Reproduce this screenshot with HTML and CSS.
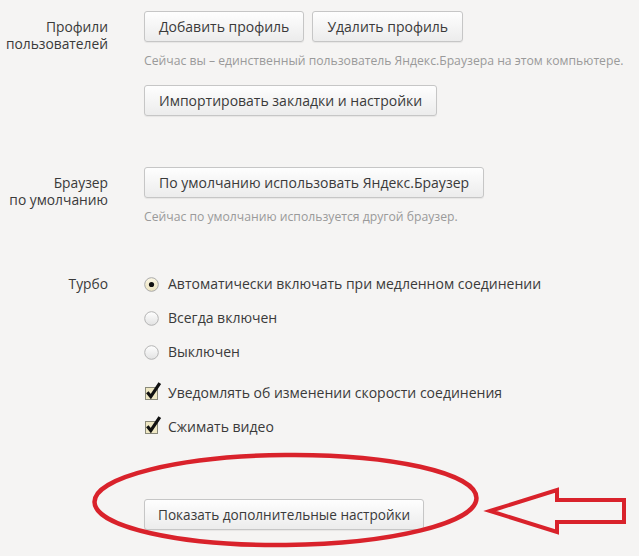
FILE: index.html
```html
<!DOCTYPE html>
<html lang="ru">
<head>
<meta charset="utf-8">
<link rel="stylesheet" href="styles.css">
</head>
<body>
<div class="page">
  <section class="section profiles">
    <div class="label"><span class="label-line">Профили</span><span class="label-line">пользователей</span></div>
    <div class="controls">
      <div class="btn-row">
        <button class="btn">Добавить профиль</button>
        <button class="btn">Удалить профиль</button>
      </div>
      <div class="hint">Сейчас вы – единственный пользователь Яндекс.Браузера на этом компьютере.</div>
      <div class="btn-row import-row">
        <button class="btn">Импортировать закладки и настройки</button>
      </div>
    </div>
  </section>

  <section class="section default-browser">
    <div class="label"><span class="label-line">Браузер</span><span class="label-line">по умолчанию</span></div>
    <div class="controls">
      <div class="btn-row">
        <button class="btn">По умолчанию использовать Яндекс.Браузер</button>
      </div>
      <div class="hint">Сейчас по умолчанию используется другой браузер.</div>
    </div>
  </section>

  <section class="section turbo">
    <div class="label turbo-label"><span class="label-line">Турбо</span></div>
    <div class="controls options">
      <div class="option">
        <svg class="radio" width="15" height="15" viewBox="0 0 15 15"><defs><linearGradient id="rg1" x1="0" y1="0" x2="0" y2="1"><stop offset="0" stop-color="#fbf7e4"/><stop offset="1" stop-color="#ece3bf"/></linearGradient></defs><circle cx="7.5" cy="7.5" r="6.8" fill="url(#rg1)" stroke="#a9a9a9"/><circle cx="7.5" cy="7.5" r="2.6" fill="#111"/></svg>
        <span>Автоматически включать при медленном соединении</span>
      </div>
      <div class="option">
        <svg class="radio" width="15" height="15" viewBox="0 0 15 15"><defs><linearGradient id="rg2" x1="0" y1="0" x2="0" y2="1"><stop offset="0" stop-color="#ffffff"/><stop offset="1" stop-color="#e2e2e2"/></linearGradient></defs><circle cx="7.5" cy="7.5" r="6.8" fill="url(#rg2)" stroke="#b4b4b4"/></svg>
        <span>Всегда включен</span>
      </div>
      <div class="option">
        <svg class="radio" width="15" height="15" viewBox="0 0 15 15"><circle cx="7.5" cy="7.5" r="6.8" fill="url(#rg2)" stroke="#b4b4b4"/></svg>
        <span>Выключен</span>
      </div>
      <div class="option check-first">
        <svg class="check" width="18" height="20" viewBox="0 0 18 20"><rect x="1.5" y="7.5" width="12" height="12" fill="#efe8c4" stroke="#8a8a7a"/><path d="M3.3 12.3 L6.8 16.6 L15.8 3.2" fill="none" stroke="#111" stroke-width="3.2" stroke-linejoin="miter"/></svg>
        <span>Уведомлять об изменении скорости соединения</span>
      </div>
      <div class="option">
        <svg class="check" width="18" height="20" viewBox="0 0 18 20"><rect x="1.5" y="7.5" width="12" height="12" fill="#efe8c4" stroke="#8a8a7a"/><path d="M3.3 12.3 L6.8 16.6 L15.8 3.2" fill="none" stroke="#111" stroke-width="3.2" stroke-linejoin="miter"/></svg>
        <span>Сжимать видео</span>
      </div>
    </div>
  </section>

  <section class="section more">
    <div class="label"></div>
    <div class="controls">
      <button class="btn btn-more">Показать дополнительные настройки</button>
    </div>
  </section>

  <svg class="annotation" width="639" height="556" viewBox="0 0 639 556">
    <ellipse cx="285.5" cy="500" rx="191" ry="45" fill="none" stroke="#d9222b" stroke-width="4.5" transform="rotate(-0.6 285 500)"/>
    <polygon points="490,511 557,490 557,500 624,500 624,522 557,522 557,532" fill="none" stroke="#d9222b" stroke-width="4" stroke-linejoin="miter"/>
  </svg>
</div>
</body>
</html>
```

FILE: styles.css
```css
* { box-sizing: border-box; }
html, body {
  margin: 0;
  padding: 0;
  background: #f5f4f3;
}
body {
  font-family: "Open Sans", "Noto Sans", sans-serif;
  font-size: 14px;
  color: #3a3a3a;
}
.page {
  position: relative;
  width: 639px;
  height: 556px;
  overflow: hidden;
  padding-top: 11px;
}
.section {
  display: grid;
  grid-template-columns: 108px 1fr;
  column-gap: 36px;
}
.label {
  text-align: right;
  padding-top: 7px;
  color: #3a3a3a;
}
.label-line {
  display: block;
  height: 17px;
  line-height: 17px;
  font-size: 13.8px;
  white-space: nowrap;
}
.btn-row {
  display: flex;
  gap: 8px;
}
.btn {
  font-family: inherit;
  font-size: 14px;
  color: #3a3a3a;
  height: 31px;
  padding: 0 14px;
  border: 1px solid #c6c6c6;
  border-radius: 3px;
  background: linear-gradient(#fefefe, #ececec);
  box-shadow: 0 1px 1px rgba(0,0,0,0.06);
  white-space: nowrap;
}
.btn-more {
  font-size: 13.6px;
  padding: 0 13px;
}
.hint {
  margin-top: 11px;
  font-size: 12.2px;
  line-height: 16px;
  color: #9a9a9a;
  white-space: nowrap;
}
.import-row { margin-top: 16px; }
.default-browser { margin-top: 51px; }
.turbo { margin-top: 42px; }
.turbo-label { padding-top: 8px; }
.options {
  display: flex;
  flex-direction: column;
}
.option {
  display: flex;
  align-items: center;
  height: 34px;
  gap: 9px;
}
.option span { line-height: 16px; }
.check-first { margin-top: 7px; }
.radio { flex: none; }
.check { flex: none; margin-top: -6px; margin-right: -3px; }
.more { margin-top: 55px; }
.annotation {
  position: absolute;
  left: 0;
  top: 0;
  pointer-events: none;
}
```
